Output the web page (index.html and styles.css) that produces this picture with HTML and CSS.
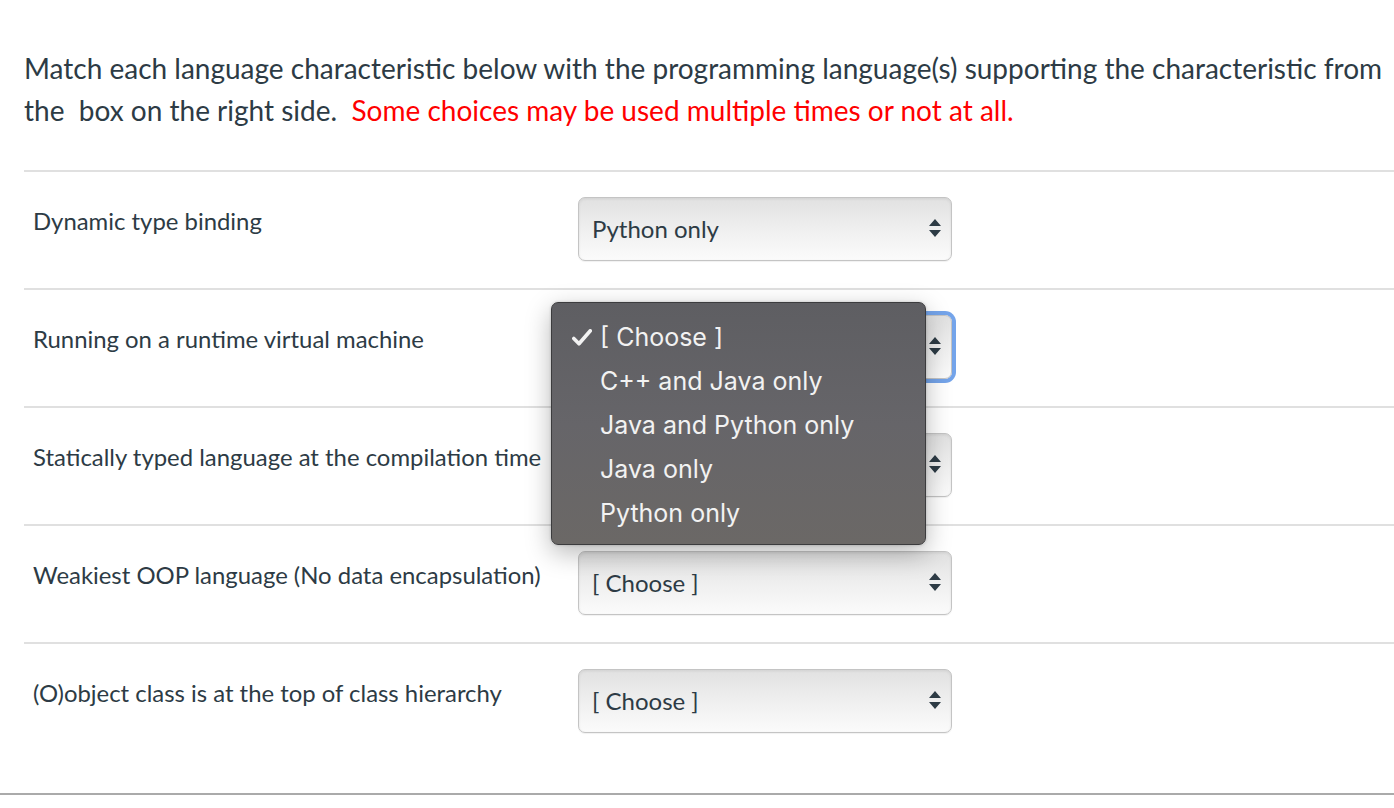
FILE: index.html
```html
<!DOCTYPE html>
<html>
  <head>
    <title>Matching question</title>
    <link rel="stylesheet" href="styles.css">
  </head>
  <body>
    <div class="question">
      <p class="intro">
        Match each language characteristic below with the programming language(s) supporting the characteristic from<br>
        the&nbsp; box on the right side.&nbsp; <span class="warn">Some choices may be used multiple times or not at all.</span>
      </p>

      <div class="answers">
        <div class="row">
          <div class="label">Dynamic type binding</div>
          <div class="select">
            <span>Python only</span>
            <svg class="arrows" width="12" height="18" viewBox="0 0 12 18"><path d="M6 0L12 7H0Z M0 11H12L6 18Z" fill="#2d3b45"/></svg>
          </div>
        </div>

        <div class="row">
          <div class="label">Running on a runtime virtual machine</div>
          <div class="select focused">
            <span>[ Choose ]</span>
            <svg class="arrows" width="12" height="18" viewBox="0 0 12 18"><path d="M6 0L12 7H0Z M0 11H12L6 18Z" fill="#2d3b45"/></svg>
          </div>
          <ul class="menu">
            <li class="checked">
              <svg class="check" width="20" height="17" viewBox="0 0 20 17"><path d="M1.8 9.5L7 14.8L18.3 1.8" fill="none" stroke="#f2f2f2" stroke-width="3.6" stroke-linecap="round" stroke-linejoin="round"/></svg>
              [ Choose ]
            </li>
            <li>C++ and Java only</li>
            <li>Java and Python only</li>
            <li>Java only</li>
            <li>Python only</li>
          </ul>
        </div>

        <div class="row">
          <div class="label">Statically typed language at the compilation time</div>
          <div class="select">
            <span>[ Choose ]</span>
            <svg class="arrows" width="12" height="18" viewBox="0 0 12 18"><path d="M6 0L12 7H0Z M0 11H12L6 18Z" fill="#2d3b45"/></svg>
          </div>
        </div>

        <div class="row">
          <div class="label">Weakiest OOP language (No data encapsulation)</div>
          <div class="select">
            <span>[ Choose ]</span>
            <svg class="arrows" width="12" height="18" viewBox="0 0 12 18"><path d="M6 0L12 7H0Z M0 11H12L6 18Z" fill="#2d3b45"/></svg>
          </div>
        </div>

        <div class="row">
          <div class="label">(O)object class is at the top of class hierarchy</div>
          <div class="select">
            <span>[ Choose ]</span>
            <svg class="arrows" width="12" height="18" viewBox="0 0 12 18"><path d="M6 0L12 7H0Z M0 11H12L6 18Z" fill="#2d3b45"/></svg>
          </div>
        </div>
      </div>
    </div>
    <div class="footer-line"></div>
  </body>
</html>
```

FILE: styles.css
```css
body {
  margin: 0;
  padding: 0;
  background: #fff;
  color: #2d3b45;
  font-family: Lato, "Liberation Sans", sans-serif;
}

.question {
  padding: 47px 0 0 24px;
  overflow: hidden;
}

.intro {
  margin: 0 0 39px;
  font-size: 28px;
  line-height: 42px;
  white-space: nowrap;
}

.warn {
  color: #f00;
}

.row {
  position: relative;
  display: flex;
  height: 116px;
  border-top: 2px solid #e0e0e0;
}

.label {
  width: 545px;
  padding: 33px 0 0 9px;
  font-size: 23.9px;
  line-height: 32px;
  white-space: nowrap;
  box-sizing: border-box;
}

.select {
  display: flex;
  align-items: center;
  justify-content: space-between;
  width: 374px;
  height: 64px;
  margin: 25px 0 0 9px;
  padding: 0 10px 2px 13px;
  box-sizing: border-box;
  border: 1px solid #c4c4c4;
  border-radius: 7px;
  background: linear-gradient(#e1e1e1, #efefef 50%, #fbfbfb);
  box-shadow: inset 0 1px 3px rgba(0,0,0,0.08), 0 1px 1px rgba(0,0,0,0.06);
  font-size: 24px;
}

.select.focused {
  box-shadow: 0 0 0 4px #74a4ea;
}

.arrows {
  display: block;
}

.menu {
  position: absolute;
  z-index: 10;
  left: 527px;
  top: 12px;
  width: 375px;
  margin: 0;
  padding: 12px 0 9px;
  list-style: none;
  box-sizing: border-box;
  border: 1px solid #3c3c3e;
  border-radius: 7px;
  background: linear-gradient(#5e5e62, #666569 50%, #6b6866);
  box-shadow: 0 8px 26px rgba(0,0,0,0.28), 0 0 3px rgba(0,0,0,0.2);
  font-family: Inter, "Open Sans", sans-serif;
  font-size: 25px;
  color: #f2f2f2;
}

.menu li {
  position: relative;
  height: 44px;
  line-height: 44px;
  padding-left: 48px;
}

.check {
  position: absolute;
  left: 20px;
  top: 14px;
}

.footer-line {
  margin-top: 33px;
  height: 2px;
  background: #aaa;
}
```
